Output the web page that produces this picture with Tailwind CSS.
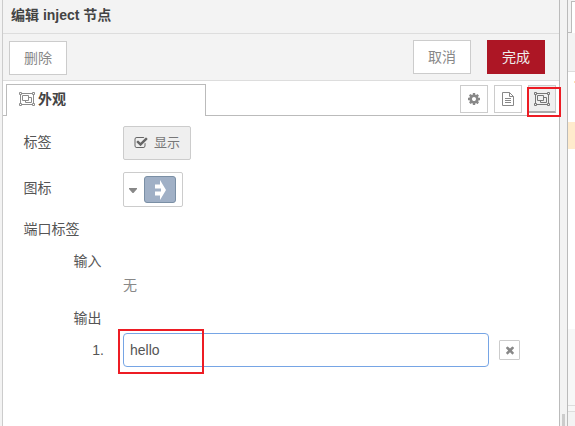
<!DOCTYPE html>
<html lang="zh-CN">
<head>
<meta charset="utf-8">
<title>编辑 inject 节点</title>
<script src="https://cdn.jsdelivr.net/npm/@tailwindcss/browser@4"></script>
</head>
<body class="h-[426px] w-[575px] overflow-hidden bg-[#f3f3f3] text-[14px] leading-5 text-[#555] font-['Liberation_Sans','Noto_Sans_CJK_SC',sans-serif]">
<svg class="hidden">
  <symbol id="group" viewBox="0 0 16 14">
    <g fill="none" stroke="currentColor">
      <path d="M3 1.500h10M3 12.500h10M1.500 3v8M14.500 3v8"/>
      <path d="M.5.5h2v2h-2zM13.500.5h2v2h-2zM.5 11.500h2v2h-2zM13.500 11.500h2v2h-2z"/>
      <path d="M3.500 3.500h6v5h-6zM9.500 5.500h3v5h-6v-2"/>
    </g>
  </symbol>
</svg>
<div class="flex h-full">
  <main class="relative ml-[2px] flex w-[558px] flex-none flex-col border-x border-l-[#ccc] border-r-[#bbb] bg-white">
    <header class="flex h-[34px] flex-none items-center border-b border-[#ddd] bg-[#f3f3f3] pb-[3px] pl-[8px] font-bold text-[#444]">编辑 inject 节点</header>
    <div class="flex h-[47px] flex-none items-start border-b border-[#ddd] bg-[#f3f3f3] pt-[6px] pl-[6px] text-[#888]">
      <button class="mt-px h-[34px] w-[58px] border border-[#ccc] bg-white">删除</button>
      <button class="ml-[346px] h-[34px] w-[58px] border border-[#ccc] bg-white">取消</button>
      <button class="ml-4 h-[34px] w-[58px] bg-[#ad1625] text-[#eee]">完成</button>
    </div>
    <div class="flex h-[35px] flex-none">
      <div class="w-[3px] border-b border-[#bbb]"></div>
      <div class="mt-[3px] flex w-[200px] items-center border border-b-0 border-[#bbb] pb-[3px] pl-3 font-bold text-[#444]">
        <svg class="mr-[3px] h-[14px] w-4 text-[#8c8c8c]"><use href="#group"/></svg>外观
      </div>
      <div class="flex flex-1 items-start justify-end gap-[6px] border-b border-[#bbb] pt-1 pr-[3px] text-[#888]">
        <button class="flex size-7 items-center justify-center border border-[#ccc]"><svg class="size-[14px]" viewBox="0 0 1792 1792" fill="currentColor"><path d="M1152 896q0-106-75-181t-181-75-181 75-75 181 75 181 181 75 181-75 75-181zm512-109v222q0 12-8 23t-20 13l-185 28q-19 54-39 91 35 50 107 138 10 12 10 25t-9 23q-27 37-99 108t-94 71q-12 0-26-9l-138-108q-44 23-91 38-16 136-29 186-7 28-36 28h-222q-14 0-24.500-8.500t-11.500-21.500l-28-184q-49-16-90-37l-141 107q-10 9-25 9-14 0-25-11-126-114-165-168-7-10-7-23 0-12 8-23 15-21 51-66.500t54-70.500q-27-50-41-99l-183-27q-13-2-21-12.500t-8-23.500v-222q0-12 8-23t19-13l186-28q14-46 39-92-40-57-107-138-10-12-10-24 0-10 9-23 26-36 98.500-107.500t94.500-71.500q13 0 26 10l138 107q44-23 91-38 16-136 29-186 7-28 36-28h222q14 0 24.500 8.500t11.500 21.500l28 184q49 16 90 37l142-107q9-9 24-9 13 0 25 10 129 119 165 170 7 8 7 22 0 12-8 23-15 21-51 66.500t-54 70.500q26 50 41 98l183 28q13 2 21 12.500t8 23.500z"/></svg></button>
        <button class="flex size-7 items-center justify-center border border-[#ccc]"><svg class="h-[14px] w-3" viewBox="0 0 12 14" fill="none" stroke="currentColor"><path d="M.5.5h7l4 4v9H.5zM7.500.5v4h4M3 6.500h6M3 8.500h6M3 10.500h6"/></svg></button>
        <button class="flex size-7 items-center justify-center border border-b-2 border-[#ccc] border-b-[#aaa] bg-[#efefef] text-[#777]"><svg class="h-[14px] w-4"><use href="#group"/></svg></button>
      </div>
    </div>

    <div class="flex flex-col pl-[20.500px]">
      <div class="mt-[10px] flex h-[34px] items-center">
        <span class="w-[99.500px] pb-[2px]">标签</span>
        <button class="flex h-[34px] w-[68px] items-center rounded-[2px] border border-[#ccc] bg-[#efefef] pl-[10px] text-[#777]"><svg class="mr-[6px] size-[14px] text-[#666]" viewBox="0 0 1792 1792" fill="currentColor"><path d="M1472 930v318q0 119-84.500 203.500t-203.500 84.500h-832q-119 0-203.500-84.500t-84.500-203.500v-832q0-119 84.500-203.500t203.500-84.500h832q63 0 117 25 15 7 18 23 3 17-9 29l-49 49q-10 10-23 10-3 0-9-2-23-6-45-6h-832q-66 0-113 47t-47 113v832q0 66 47 113t113 47h832q66 0 113-47t47-113v-254q0-13 9-22l64-64q10-10 23-10 6 0 12 3 20 8 20 29zm231-489l-814 814q-24 24-57 24t-57-24l-430-430q-24-24-24-57t24-57l110-110q24-24 57-24t57 24l263 263 647-647q24-24 57-24t57 24l110 110q24 24 24 57t-24 57z"/></svg><span class="text-[13px]">显示</span></button>
      </div>
      <div class="mt-3 flex h-[35px] items-center">
        <span class="w-[99.500px] pb-[3px]">图标</span>
        <button class="flex h-[35px] w-[60px] items-center rounded-[2px] border border-[#ccc] pl-[5px]">
          <svg class="mt-[2px] mr-[7px] h-[5px] w-2" viewBox="0 0 8 5"><path d="M0 0h8v1L4.500 5h-1L0 1z" fill="#888"/></svg>
          <span class="flex h-[27px] w-8 items-center justify-center rounded-[3px] border border-[#7a8fa5] bg-[#a0b0c6]"><svg class="h-5 w-[11px]" viewBox="0 0 11 20" fill="#fff"><path d="M0 4.500h5V0l6 10-6 10v-4.500H0v-4h6v-3H0z"/></svg></span>
        </button>
      </div>
      <div class="mt-3 h-5">端口标签</div>
      <div class="mt-3 ml-[50px] h-5">输入</div>
      <div class="mt-[4px] ml-[99.500px] h-5 text-[#888]">无</div>
      <div class="mt-[13px] ml-[50px] h-5">输出</div>
      <div class="mt-[5px] flex h-[34px] items-center">
        <span class="w-[99.500px] pr-[19px] text-right">1.</span>
        <input class="h-[34px] w-[366px] rounded-[4px] border border-[#76a5e5] px-[6px] text-[#555] outline-none" value="hello">
        <button class="ml-[10px] flex h-5 w-[21px] items-center justify-center rounded-[1px] border border-[#ccc] text-[#888]"><svg class="size-3" viewBox="0 0 1792 1792" fill="currentColor"><path d="M1490 1322q0 40-28 68l-136 136q-28 28-68 28t-68-28l-294-294-294 294q-28 28-68 28t-68-28l-136-136q-28-28-28-68t28-68l294-294-294-294q-28-28-28-68t28-68l136-136q28-28 68-28t68 28l294 294 294-294q28-28 68-28t68 28l136 136q28 28 28 68t-28 68l-294 294 294 294q28 28 28 68z"/></svg></button>
      </div>
    </div>
    <div class="absolute top-[87px] left-[524px] z-10 h-[30px] w-[34px] border-2 border-[#ed1c24]"></div>
    <div class="absolute top-[329px] left-[115px] z-10 h-[45px] w-[86px] border-2 border-[#ed1c24]"></div>
  </main>
  <div class="flex w-[7px] flex-none items-end justify-center pr-px"><div class="h-3 w-[3px] bg-[#ccc]"></div></div>
  <aside class="flex flex-1 flex-col border-l border-[#bbb] bg-white">
    <div class="flex h-[33px] flex-none bg-[#f3f3f3]">
      <div class="w-[3px] border-b border-[#bbb]"></div>
      <div class="mt-px flex-1 border-t border-l border-[#bbb] bg-white"></div>
    </div>
    <div class="h-[39px] flex-none border-b border-[#ddd] bg-[#f3f3f3]"></div>
    <div class="flex h-[50px] flex-none justify-end pt-[9px]"><div class="h-[2px] w-px bg-[#ffdfb0]"></div></div>
    <div class="h-[27px] flex-none bg-[#ffebcc]"></div>
    <div class="h-[180px] flex-none"></div>
    <div class="h-[77px] flex-none border-b border-[#ddd] bg-[#f7f7f7]"></div>
    <div class="h-[6px] flex-none border-b border-[#ddd] bg-[#f7f7f7]"></div>
    <div class="flex-1 bg-[#f3f3f3]"></div>
  </aside>
</div>
</body>
</html>
